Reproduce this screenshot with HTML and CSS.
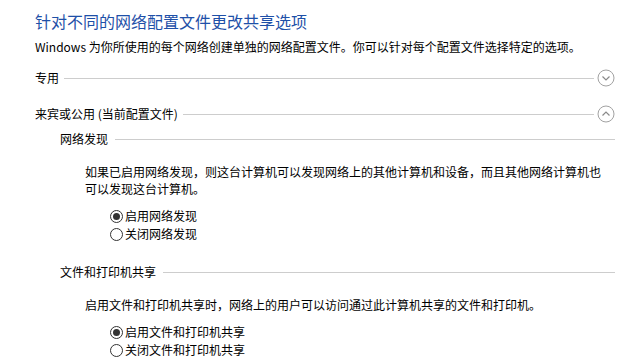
FILE: index.html
```html
<!DOCTYPE html>
<html>
  <head>
    <meta charset="UTF-8">
    <title>高级共享设置</title>
    <link rel="stylesheet" href="styles.css">
  </head>
  <body>
    <div class="page">
      <h1 class="title">针对不同的网络配置文件更改共享选项</h1>
      <p class="desc">Windows 为你所使用的每个网络创建单独的网络配置文件。你可以针对每个配置文件选择特定的选项。</p>

      <div class="group-head">
        <span>专用</span>
        <i class="rule"></i>
        <svg class="toggle" width="18" height="18" viewBox="0 0 18 18">
          <circle cx="9" cy="9" r="8" />
          <path d="M5.5 7.5 L9 11 L12.5 7.5" />
        </svg>
      </div>

      <div class="group-head open">
        <span>来宾或公用 (当前配置文件)</span>
        <i class="rule"></i>
        <svg class="toggle" width="18" height="18" viewBox="0 0 18 18">
          <circle cx="9" cy="9" r="8" />
          <path d="M5.5 10.5 L9 7 L12.5 10.5" />
        </svg>
      </div>

      <div class="group-body">
        <div class="sub">
          <div class="sub-head"><span>网络发现</span><i class="rule"></i></div>
          <p class="note">如果已启用网络发现，则这台计算机可以发现网络上的其他计算机和设备，而且其他网络计算机也可以发现这台计算机。</p>
          <div class="options">
            <label class="radio"><span class="dot on"></span>启用网络发现</label>
            <label class="radio"><span class="dot"></span>关闭网络发现</label>
          </div>
        </div>

        <div class="sub">
          <div class="sub-head"><span>文件和打印机共享</span><i class="rule"></i></div>
          <p class="note">启用文件和打印机共享时，网络上的用户可以访问通过此计算机共享的文件和打印机。</p>
          <div class="options">
            <label class="radio"><span class="dot on"></span>启用文件和打印机共享</label>
            <label class="radio"><span class="dot"></span>关闭文件和打印机共享</label>
          </div>
        </div>
      </div>
    </div>
  </body>
</html>
```

FILE: styles.css
```css
body {
  margin: 0;
  background: #fff;
  color: #000;
  font-family: "Noto Sans CJK SC", "Liberation Sans", sans-serif;
  font-size: 12px;
  line-height: 16px;
}

.page {
  padding: 10px 28px 0 35px;
}

.title {
  margin: 0;
  font-size: 16px;
  font-weight: normal;
  line-height: 22px;
  color: #1e50a8;
}

.desc {
  margin: 7px 0 0;
}

.group-head {
  display: flex;
  align-items: center;
  height: 20px;
  margin-top: 13px;
}

.group-head.open {
  margin-top: 16px;
}

.rule {
  flex: 1;
  height: 1px;
  background: #cdcdcd;
  margin-left: 5px;
}

.toggle {
  margin-left: 3px;
}

.toggle circle {
  fill: none;
  stroke: #a2a2a2;
  stroke-width: 1;
}

.toggle path {
  fill: none;
  stroke: #8a8a8a;
  stroke-width: 1.2;
}

.group-body {
  padding-left: 25px;
}

.sub {
  margin-top: 21px;
}

.sub:first-child {
  margin-top: 7px;
}

.sub-head {
  display: flex;
  align-items: center;
  height: 16px;
}

.sub-head .rule {
  margin-left: 7px;
}

.note {
  width: 522px;
  margin: 16px 0 10px;
  padding-left: 25px;
  line-height: 17px;
}

.options {
  padding-left: 50px;
}

.radio {
  display: flex;
  align-items: center;
  height: 18px;
}

.dot {
  position: relative;
  box-sizing: border-box;
  width: 13px;
  height: 13px;
  margin-right: 2px;
  border: 1px solid #333;
  border-radius: 50%;
  background: #fff;
}

.dot.on::after {
  content: "";
  position: absolute;
  top: 2px;
  left: 2px;
  width: 7px;
  height: 7px;
  border-radius: 50%;
  background: #333;
}
```
